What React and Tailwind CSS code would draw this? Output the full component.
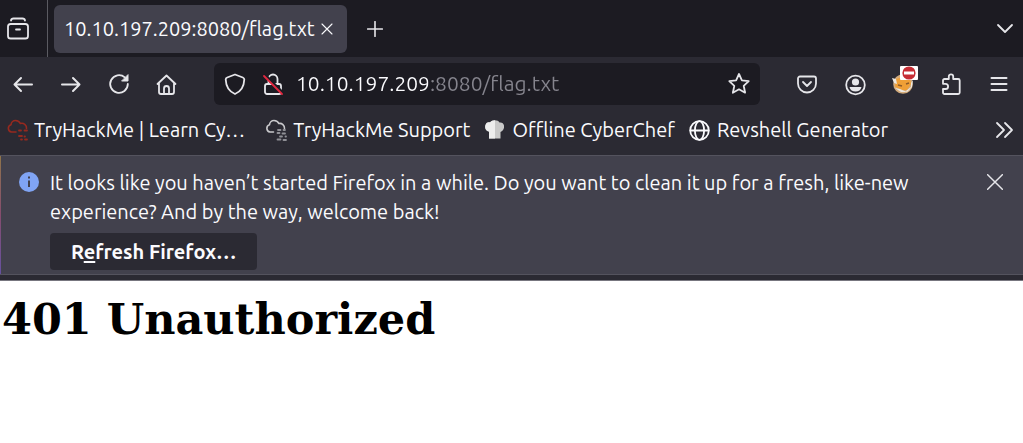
import React from "react";

function Icon({ className = "size-6", children, width = 1.8, box = "0 0 24 24" }) {
  return (
    <svg
      className={`shrink-0 ${className}`}
      viewBox={box}
      fill="none"
      stroke="currentColor"
      strokeWidth={width}
      strokeLinecap="round"
      strokeLinejoin="round"
      aria-hidden="true"
    >
      {children}
    </svg>
  );
}

function IconButton({ label, className = "", children }) {
  return (
    <button
      type="button"
      aria-label={label}
      className={`flex size-8 shrink-0 items-center justify-center text-[#e6e6ea] ${className}`}
    >
      {children}
    </button>
  );
}

function TabStrip() {
  return (
    <div className="flex h-[57px] items-center bg-[#1c1b22]">
      <div className="flex h-full w-12 shrink-0 items-center border-r border-[#5b5b62] pl-0.5">
        <IconButton label="Firefox View">
          <Icon>
            <rect x="2" y="7" width="20" height="14.500" rx="2.600" />
            <path d="M5 3.500C5.200 2.100 6 1.500 7.500 1.500h9c1.500 0 2.300.6 2.500 2M10 12.500h4" />
          </Icon>
        </IconButton>
      </div>
      <div className="ml-1.5 flex h-12 items-center rounded-md bg-[#42414d] pr-3 pl-2.5">
        <a href="#tab" className="text-xl">10.10.197.209:8080/flag.txt</a>
        <button type="button" aria-label="Close tab" className="ml-1 flex size-4 items-center justify-center">
          <Icon className="size-3" width={2.2}>
            <path d="M2 2l20 20M22 2L2 22" />
          </Icon>
        </button>
      </div>
      <IconButton label="New tab" className="ml-3">
        <Icon className="size-4" width={2.4}>
          <path d="M12 1v22M1 12h22" />
        </Icon>
      </IconButton>
      <IconButton label="List all tabs" className="mr-0.5 ml-auto">
        <Icon className="size-6">
          <path d="M5 8l7 7 7-7" />
        </Icon>
      </IconButton>
    </div>
  );
}

function AddressBar() {
  return (
    <div className="ml-[31px] flex h-[42px] min-w-0 flex-1 items-center rounded-md bg-[#1c1b22] px-[5px]">
      <IconButton label="Tracking protection">
        <Icon>
          <path d="M12 2.500l7.800 3c1 .4 1.500 1 1.500 2C21 14.500 18 19.500 12 22 6 19.500 3 14.500 2.700 7.500c0-1 .5-1.600 1.500-2z" />
        </Icon>
      </IconButton>
      <IconButton label="Connection is not secure" className="ml-1.5">
        <Icon>
          <path d="M7.500 11.500V7a4.500 4.500 0 019 0v4.500M6 12h12a2 2 0 012 2v6a2 2 0 01-2 2H6a2 2 0 01-2-2v-6a2 2 0 012-2z" />
          <path d="M4.500 3.500l17 17" stroke="#1c1b22" strokeWidth="3" />
          <path d="M3 4l18 18" stroke="#e22840" />
        </Icon>
      </IconButton>
      <input
        aria-label="Address"
        type="text"
        defaultValue="10.10.197.209:8080/flag.txt"
        className="ml-[7px] min-w-0 flex-1 bg-transparent bg-linear-to-r from-[#fbfbfe] from-[132px] to-[#85848d] to-[132px] bg-clip-text text-[21px] text-transparent caret-white outline-none"
      />
      <IconButton label="Bookmark this page">
        <Icon>
          <path d="M12 2l2.900 6.300 6.800.8-5 4.700 1.400 6.900L12 17.300l-6.100 3.400 1.400-6.900-5-4.700 6.800-.8z" />
        </Icon>
      </IconButton>
    </div>
  );
}

function ShieldedExtension() {
  return (
    <svg className="size-8" viewBox="0 0 32 32" aria-hidden="true">
      <circle cx="16" cy="20" r="9.800" fill="#d3ab7c" />
      <path d="M9 15l7-2 7 2 1 5-4 6-5 .5-7-4z" fill="#ef9f36" />
      <path d="M5 14l4 1 1 5-3-1zM8 24l6 4 6 0-7-3zM24 19l2-3-1 7-5 5-1-1 5-4z" fill="#ece8e2" />
      <path d="M11 21l4 1M19 20l3-1" stroke="#8c5a2a" strokeWidth="1.500" />
      <rect x="13" y="2" width="18" height="14" rx="1" fill="#fff" />
      <circle cx="22" cy="9" r="6.600" fill="#c62d35" />
      <path d="M17 7.500h10v3H17z" fill="#fff" />
    </svg>
  );
}

function Toolbar() {
  return (
    <div className="flex h-[54px] items-center pr-2 pl-[7px]">
      <nav aria-label="Navigation" className="flex gap-4">
        <IconButton label="Back">
          <Icon width={2}><path d="M21 12.500H3.500M10 6l-6.500 6.500L10 19" /></Icon>
        </IconButton>
        <IconButton label="Forward">
          <Icon width={2}><path d="M3 12.500h17.500M14 6l6.500 6.500L14 19" /></Icon>
        </IconButton>
        <IconButton label="Reload">
          <Icon>
            <path d="M20.800 12a8.800 8.800 0 11-3-6.600" />
            <path d="M21 3v6h-6z" fill="currentColor" strokeWidth="1" />
          </Icon>
        </IconButton>
        <IconButton label="Home">
          <Icon>
            <path d="M2.500 12L11.500 3.500l9 8.500M4 10.500V20a2 2 0 002 2h11a2 2 0 002-2v-9.500M9 22v-5.500a2.500 2.500 0 015 0V22" />
          </Icon>
        </IconButton>
      </nav>
      <AddressBar />
      <div className="ml-[31px] flex gap-4">
        <IconButton label="Save to Pocket">
          <Icon>
            <path d="M5 4.500h14a2 2 0 012 2v5a9 9 0 01-18 0v-5a2 2 0 012-2zM8 10l4 4 4-4" />
          </Icon>
        </IconButton>
        <IconButton label="Account">
          <Icon>
            <circle cx="12.500" cy="13" r="9.300" />
            <circle cx="12.500" cy="10" r="3.600" fill="currentColor" stroke="none" />
            <path d="M6.500 15h12c-.5 3-3 4.500-6 4.500s-5.500-1.500-6-4.500z" fill="currentColor" stroke="none" />
          </Icon>
        </IconButton>
        <IconButton label="Proxy disabled" className="-translate-y-1">
          <ShieldedExtension />
        </IconButton>
        <IconButton label="Extensions">
          <Icon>
            <path d="M4 10.500V8.500A1.500 1.500 0 015.500 7h4.300V4.500a2.200 2.200 0 014.400 0V7h5A1.500 1.500 0 0120.700 8.500v12a1.500 1.500 0 01-1.500 1.500H5.500A1.500 1.500 0 014 20.500V17h2.500a2.600 2.600 0 000-5.200H4z" />
          </Icon>
        </IconButton>
        <IconButton label="Menu">
          <Icon width={2}><path d="M4.500 6h15M4.500 12h15M4.500 18h15" /></Icon>
        </IconButton>
      </div>
    </div>
  );
}

function LearnIcon() {
  return (
    <Icon className="size-6 text-[#96291f]" width={1.600}>
      <path d="M10 14H5.500A3.700 3.700 0 015 6.800 4.500 4.500 0 019.500 2.500c2.500 0 4 1 4.800 3a4.700 4.700 0 016.200 5" />
      <path d="M13 12.500h2M18.500 12.500h2.500M13 18h3M18.500 18.500h.5M15 21.500h1M19 21.500h2" strokeWidth="1.800" />
    </Icon>
  );
}

function SupportIcon() {
  return (
    <Icon className="size-6 text-[#c9c9cc]" width={1.600}>
      <path d="M8.500 14H5A3.700 3.700 0 014.500 6.800 4.500 4.500 0 019 2.500c2.500 0 4 1 4.800 3a4.700 4.700 0 015.700 5" />
      <g stroke="#909096" strokeWidth="1.800">
        <path d="M13 12h2.500M18.500 12h1.500M12.500 15h2M17.500 15.500h2.500M15 18.500h2M20.500 18.500h.5M12.500 21.500h3M18.500 22h2.500" />
      </g>
    </Icon>
  );
}

function Bookmark({ icon, children, className = "" }) {
  return (
    <a href="#bookmark" className={`flex shrink-0 items-center gap-1 whitespace-nowrap text-xl ${className}`}>
      {icon}
      <span>{children}</span>
    </a>
  );
}

function Bookmarks() {
  return (
    <nav aria-label="Bookmarks" className="flex h-11 items-center pr-1 pb-1.5 pl-1.5">
      <div className="flex min-w-0 flex-1 gap-3.5">
        <Bookmark className="pr-1.5" icon={<LearnIcon />}>TryHackMe | Learn Cy…</Bookmark>
        <Bookmark icon={<SupportIcon />}>TryHackMe Support</Bookmark>
        <Bookmark
          icon={
            <svg className="size-6" viewBox="0 0 24 24" aria-hidden="true">
              <path d="M5 20.500v-7C2 13 .5 10 1.500 7c.8-2.500 3-3 4.500-2.500C8 1.500 14 1.500 15.500 4.500c2-.5 4 .5 4.500 3 .5 3-1 5.500-3.500 6.500v6.500z" fill="#c9c9c9" />
              <path d="M5 20.500v-7C2 13 .5 10 1.500 7c.8-2.500 3-3 4.500-2.500C7 3 9 2.300 11 2.300v18.200z" fill="#ededed" />
            </svg>
          }
        >
          Offline CyberChef
        </Bookmark>
        <Bookmark
          icon={
            <Icon>
              <circle cx="10.500" cy="12.500" r="9.300" />
              <ellipse cx="10.500" cy="12.500" rx="4.600" ry="9.300" />
              <path d="M1.500 12.500h18" />
            </Icon>
          }
        >
          Revshell Generator
        </Bookmark>
      </div>
      <IconButton label="Show more bookmarks" className="-mr-0.5">
        <Icon><path d="M4 5l7 7-7 7M12 5l7 7-7 7" /></Icon>
      </IconButton>
    </nav>
  );
}

function Notification() {
  return (
    <section
      aria-label="Firefox notification"
      className="flex border-y border-[#54535e] bg-[#42414d]"
    >
      <div className="w-px shrink-0 bg-linear-to-b from-[#8f7448] via-[#854c6e] to-[#6550a0]" />
      <div className="flex min-w-0 flex-1 items-start pt-3 pr-3 pb-1 pl-4">
        <svg className="mt-0.5 size-6 shrink-0" viewBox="0 0 24 24" aria-hidden="true">
          <circle cx="12" cy="12" r="10" fill="#80a4f4" />
          <path d="M12 6.500v2M12 10.500v6.500" stroke="#42414d" strokeWidth="2" />
        </svg>
        <div className="ml-[9px] max-w-[870px] flex-1">
          <p className="text-xl leading-[29px]">
            It looks like you haven’t started Firefox in a while. Do you want to clean it up for a fresh, like-new
            experience? And by the way, welcome back!
          </p>
          <button type="button" className="mt-[7px] h-[37px] rounded bg-[#2b2a33] px-[21px] text-xl font-bold">
            R<u className="decoration-2 underline-offset-2">e</u>fresh Firefox…
          </button>
        </div>
        <IconButton label="Close notification" className="-mt-0.5 ml-auto">
          <Icon className="size-4" width={2.2}><path d="M1 1l22 22M23 1L1 23" /></Icon>
        </IconButton>
      </div>
    </section>
  );
}

export default function App() {
  return (
    <div className="min-h-screen bg-white">
      <header className="border-b border-[#77767f] bg-[#2b2a33] pb-[5px] font-['Ubuntu','Noto_Sans',sans-serif] text-[#fbfbfe]">
        <TabStrip />
        <Toolbar />
        <Bookmarks />
        <Notification />
      </header>
      <main className="px-0.5 pt-[13px] text-black">
        <h1 className="font-['DejaVu_Serif',serif] text-[43px] leading-[50px] font-bold">401 Unauthorized</h1>
      </main>
    </div>
  );
}
